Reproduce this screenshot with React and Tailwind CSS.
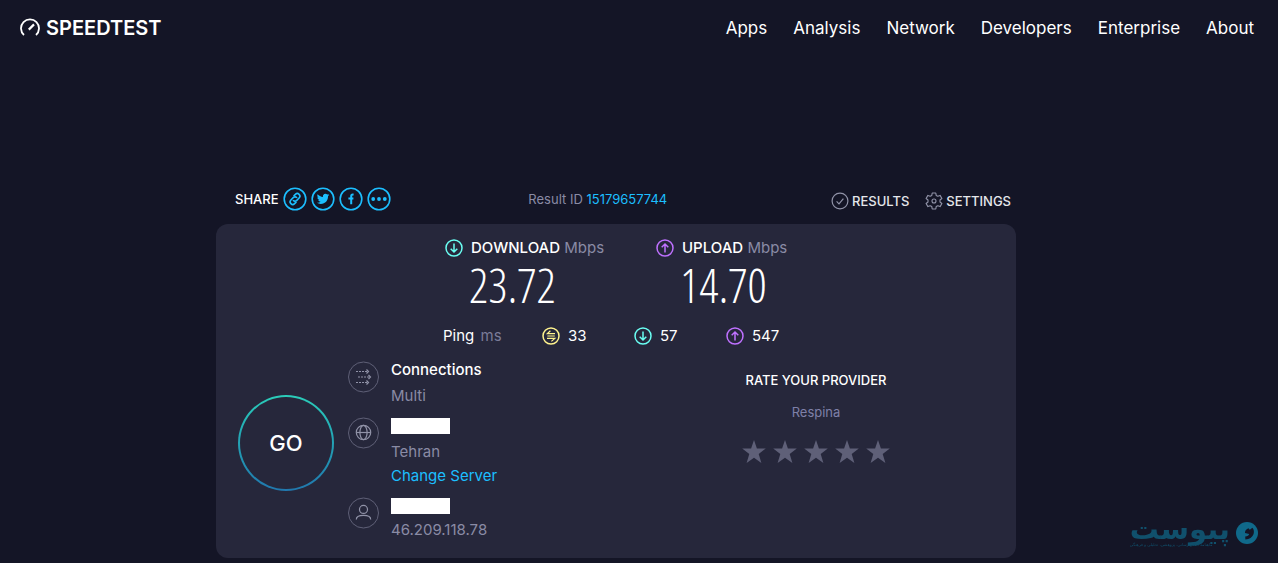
import React, { useState } from 'react'

const navLinks = ["Apps", "Analysis", "Network", "Developers", "Enterprise", "About"]

function GaugeLogo() {
    return (
        <svg width="20" height="20" viewBox="0 0 20 20" fill="none" stroke="white" strokeWidth="1.8">
            <path d="M4 17 A9 9 0 1 1 16 17" />
            <path d="M8.8 11.6 L14 6.4" strokeWidth="2.2" />
        </svg>
    )
}

// round icon used for download, upload and ping
function RoundIcon({ type }) {
    const colors = { down: "#6afff3", up: "#bf71ff", ping: "#fff38e" }
    return (
        <svg className="shrink-0" width="18" height="18" viewBox="0 0 18 18" fill="none" stroke={colors[type]} strokeWidth="1.5">
            <circle cx="9" cy="9" r="8" />
            {type === "down" && <path d="M9 4.5 V13 M5.7 9.7 L9 13 L12.3 9.7" />}
            {type === "up" && <path d="M9 13.5 V5 M5.7 8.3 L9 5 L12.3 8.3" />}
            {type === "ping" && <path d="M13 6.6 H5.4 L8.4 3.8 M5.4 9 H12.8 M5 11.4 H12.8 L9.4 14.4" strokeWidth="1.2" />}
        </svg>
    )
}

function ShareButton({ label, children }) {
    return (
        <button aria-label={label} className="cursor-pointer">
            <svg width="24" height="24" viewBox="0 0 24 24" fill="none" stroke="#1cbfff" strokeWidth="1.6">
                <circle cx="12" cy="12" r="10.8" />
                {children}
            </svg>
        </button>
    )
}

function InfoRow({ icon, children }) {
    return (
        <div className="flex gap-[11px]">
            <svg className="mt-[3px] shrink-0" width="32" height="32" viewBox="0 0 32 32" fill="none" stroke="#9193a8">
                <circle cx="15.5" cy="16" r="15" stroke="#5f6077" />
                {icon}
            </svg>
            <div className="text-[15px] leading-6 text-[#8a8ba5]">{children}</div>
        </div>
    )
}

function Stars() {
    const [rating, setRating] = useState(0)

    return (
        <div className="mt-4 flex justify-center gap-[7px]">
            {[1, 2, 3, 4, 5].map((n) => (
                <button key={n} aria-label={`Rate ${n}`} onClick={() => setRating(n)} className="cursor-pointer">
                    <svg width="24" height="24" viewBox="0 0 24 24" fill={n <= rating ? "#fff38e" : "#5f6078"}>
                        <path d="M12 0 L14.9 8.4 H23.8 L16.7 13.9 L19.4 23 L12 17.7 L4.6 23 L7.3 13.9 L0.2 8.4 H9.1 Z" />
                    </svg>
                </button>
            ))}
        </div>
    )
}

function Speed({ type, name, value }) {
    return (
        <div className="w-[211px]">
            <div className="flex h-6 items-center gap-2 text-[15px]">
                <RoundIcon type={type} />
                <p><span className="font-medium">{name}</span> <span className="text-[#8a8ba5]">Mbps</span></p>
            </div>
            <p className="pl-6 font-['Open_Sans_Condensed_Light','Roboto_Condensed','Liberation_Sans_Narrow',sans-serif] text-5xl leading-[50px] font-extralight">{value}</p>
        </div>
    )
}

function App() {
    return (
        <div className="min-h-screen bg-[#141526] font-['Inter','Liberation_Sans',sans-serif] text-white">

            {/* Header */}
            <header className="flex h-14 items-center justify-between pr-6 pl-5">
                <a href="#" className="flex items-center gap-[6px]">
                    <GaugeLogo />
                    <span className="text-xl font-semibold">SPEEDTEST</span>
                </a>
                <nav className="flex gap-[26px] text-[17px] leading-7">
                    {navLinks.map((link) => (
                        <a key={link} href="#">{link}</a>
                    ))}
                </nav>
            </header>

            <main className="flex justify-center pt-[130px] pr-[46px] pb-[5px]">
                <div className="w-full max-w-[800px]">

                    {/* Share / result id / settings */}
                    <div className="flex h-[38px] items-start justify-between pr-[5px] pl-[19px] text-[13px] leading-[26px]">
                        <div className="flex items-center gap-1">
                            <span className="font-medium">SHARE</span>
                            <ShareButton label="Copy link">
                                <g transform="rotate(-45 12 12)" strokeWidth="1.6">
                                    <path d="M11 15 H8.4 A2.6 2.6 0 0 1 8.4 9.8 H12 A2.4 2.4 0 0 1 14.2 12.6" />
                                    <path d="M13 9 H15.6 A2.6 2.6 0 0 1 15.6 14.2 H12 A2.4 2.4 0 0 1 9.8 11.4" />
                                </g>
                            </ShareButton>
                            <ShareButton label="Twitter">
                                <path stroke="none" fill="#1cbfff" transform="translate(5.8 5.6) scale(0.52)" d="M23.95 4.57a10 10 0 0 1-2.82.77 4.96 4.96 0 0 0 2.16-2.72c-.95.55-2 .95-3.13 1.18a4.92 4.92 0 0 0-8.38 4.48C7.69 8.1 4.07 6.13 1.64 3.16a4.82 4.82 0 0 0-.67 2.48c0 1.71.87 3.21 2.19 4.1a4.9 4.9 0 0 1-2.23-.62v.06a4.92 4.92 0 0 0 3.95 4.83 5 5 0 0 1-2.21.08 4.94 4.94 0 0 0 4.6 3.42A9.87 9.87 0 0 1 0 19.54a13.99 13.99 0 0 0 7.56 2.21c9.05 0 14-7.5 14-13.99 0-.21 0-.42-.02-.63a9.94 9.94 0 0 0 2.46-2.55z" />
                            </ShareButton>
                            <ShareButton label="Facebook">
                                <path d="M14.6 7.4 H13.8 Q12.2 7.4 12.2 9.2 V17.2 M9.4 11.4 H14.4" strokeWidth="2" />
                            </ShareButton>
                            <ShareButton label="More">
                                <g stroke="none" fill="#1cbfff">
                                    <circle cx="6.2" cy="12" r="1.9" />
                                    <circle cx="12" cy="12" r="1.9" />
                                    <circle cx="17.8" cy="12" r="1.9" />
                                </g>
                            </ShareButton>
                        </div>
                        <p className="mr-[26px] text-[#8a8ba5]">
                            Result ID <a href="#" className="text-[#1cbfff]">15179657744</a>
                        </p>
                        <div className="flex gap-4 pt-0.5 font-medium text-gray-200">
                            <a href="#" className="flex items-center gap-[3px]">
                                <svg width="18" height="18" viewBox="0 0 18 18" fill="none" stroke="#9193a8" strokeWidth="1.2">
                                    <circle cx="9" cy="9" r="7.9" />
                                    <path d="M5.6 9.4 L8 11.8 L12.4 6.6" />
                                </svg>
                                RESULTS
                            </a>
                            <button className="flex cursor-pointer items-center gap-[3px]">
                                <svg width="18" height="18" viewBox="0 0 18 18" fill="none" stroke="#9193a8" strokeWidth="1.1" strokeLinejoin="round">
                                    <path d="M7.2 1 H10.8 L11.2 3.4 L12.8 4.3 L15.1 3.4 L16.9 6.5 L15 8 V10 L16.9 11.5 L15.1 14.6 L12.8 13.7 L11.2 14.6 L10.8 17 H7.2 L6.8 14.6 L5.2 13.7 L2.9 14.6 L1.1 11.5 L3 10 V8 L1.1 6.5 L2.9 3.4 L5.2 4.3 L6.8 3.4 Z" />
                                    <circle cx="9" cy="9" r="2" />
                                </svg>
                                SETTINGS
                            </button>
                        </div>
                    </div>

                    <div className="rounded-xl bg-[#26273b] pt-3 pb-[14px]">

                        {/* Speeds */}
                        <div className="flex pl-[229px]">
                            <Speed type="down" name="DOWNLOAD" value="23.72" />
                            <Speed type="up" name="UPLOAD" value="14.70" />
                        </div>

                        {/* Ping */}
                        <div className="mt-[14px] flex h-6 items-center pl-[227px] text-[15px]">
                            <p className="w-[99px]">Ping <span className="ml-0.5 text-[#7b7c98]">ms</span></p>
                            <div className="flex w-[92px] items-center gap-2"><RoundIcon type="ping" />33</div>
                            <div className="flex w-[92px] items-center gap-2"><RoundIcon type="down" />57</div>
                            <div className="flex w-[92px] items-center gap-2"><RoundIcon type="up" />547</div>
                        </div>

                        <div className="mt-[10px] flex items-start pl-[22px]">
                            <button className="mt-[37px] size-24 shrink-0 cursor-pointer rounded-full bg-linear-to-b from-[#2bcdb9] to-[#2177ad] p-[2px]">
                                <span className="flex size-full items-center justify-center rounded-full bg-[#26273b] text-[22px] font-medium">GO</span>
                            </button>

                            <div className="ml-[14px] flex flex-col gap-[6px]">
                                <InfoRow
                                    icon={
                                        <g strokeWidth="1.2">
                                            <path d="M8 10.5 H20 M10 16 H22 M8 21.5 H20" strokeDasharray="2 1" />
                                            <path d="M18.5 8.5 L20.5 10.5 L18.5 12.5 M20.5 14 L22.5 16 L20.5 18 M18.5 19.5 L20.5 21.5 L18.5 23.5" />
                                        </g>
                                    }
                                >
                                    <p className="mb-[2px] font-medium text-white">Connections</p>
                                    <p>Multi</p>
                                </InfoRow>
                                <InfoRow
                                    icon={
                                        <g strokeWidth="1.2">
                                            <circle cx="15.5" cy="15.5" r="7.2" />
                                            <ellipse cx="15.5" cy="15.5" rx="3.6" ry="7.2" />
                                            <path d="M8.3 15.5 H22.7" />
                                        </g>
                                    }
                                >
                                    <div className="mb-[2px] flex h-6 items-center">
                                        <div className="h-4 w-[59px] bg-white" />
                                    </div>
                                    <p>Tehran</p>
                                    <a href="#" className="block text-[#1cbfff]">Change Server</a>
                                </InfoRow>
                                <InfoRow
                                    icon={
                                        <g strokeWidth="1.2">
                                            <circle cx="15.5" cy="12.4" r="4" />
                                            <path d="M8.3 22.4 C8.3 17 22.7 17 22.7 22.4" />
                                        </g>
                                    }
                                >
                                    <div className="flex h-6 items-center">
                                        <div className="h-4 w-[59px] bg-white" />
                                    </div>
                                    <p className="mb-[2px]">46.209.118.78</p>
                                </InfoRow>
                            </div>

                            <div className="mt-[10px] ml-auto w-[400px] text-center text-[13px] leading-6">
                                <h2 className="font-medium">RATE YOUR PROVIDER</h2>
                                <p className="mt-2 text-[#7f80a8]">Respina</p>
                                <Stars />
                            </div>
                        </div>
                    </div>
                </div>
            </main>

            {/* Watermark over the corner of the page */}
            <div dir="rtl" className="fixed right-5 bottom-4 flex items-center gap-[6px] font-['DejaVu_Sans',sans-serif] text-[#10506c]">
                <svg className="mt-1" width="22" height="22" viewBox="0 0 22 22">
                    <circle cx="11" cy="11" r="11" fill="#10698a" />
                    <path d="M12.4 6.2 L13.8 7.8 L16.4 5.8 Q18.6 8 17.6 12 Q15.6 17.2 9.4 17.6 L9.2 14.4 Q12.6 14.4 13.2 12 L9 11 Q8.6 8 12.4 6.2 Z" fill="#141526" />
                </svg>
                <div>
                    <p className="text-[29px] leading-7 font-bold">پیوست</p>
                    <p className="text-end text-[4px] leading-1">ماهنامه اطلاع رسانی، پژوهشی، تحلیلی و فرهنگی</p>
                </div>
            </div>
        </div>
    )
}

export default App;
